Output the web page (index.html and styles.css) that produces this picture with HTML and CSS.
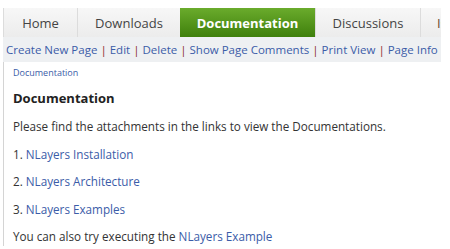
FILE: index.html
```html
<!DOCTYPE html>
<html lang="en">
<head>
    <meta charset="UTF-8">
    <title>Documentation</title>
    <link rel="stylesheet" href="styles.css">
</head>
<body>
<div class="page">
    <div class="tabs">
        <a class="tab" href="#">Home</a>
        <a class="tab" href="#">Downloads</a>
        <a class="tab active" href="#">Documentation</a>
        <a class="tab" href="#">Discussions</a>
        <a class="tab" href="#">Issue Tracker</a>
    </div>
    <div class="actions">
        <a href="#">Create New Page</a> <span class="sep">|</span>
        <a href="#">Edit</a> <span class="sep">|</span>
        <a href="#">Delete</a> <span class="sep">|</span>
        <a href="#">Show Page Comments</a> <span class="sep">|</span>
        <a href="#">Print View</a> <span class="sep">|</span>
        <a href="#">Page Info</a>
    </div>
    <div class="content">
        <div class="crumb"><a href="#">Documentation</a></div>
        <h2>Documentation</h2>
        <p>Please find the attachments in the links to view the Documentations.</p>
        <p>1. <a href="#">NLayers Installation</a></p>
        <p>2. <a href="#">NLayers Architecture</a></p>
        <p>3. <a href="#">NLayers Examples</a></p>
        <p>You can also try executing the <a href="#">NLayers Example</a></p>
    </div>
</div>
</body>
</html>
```

FILE: styles.css
```css
body {
    margin: 0;
    background: #ffffff;
    font-family: "Open Sans", "DejaVu Sans", sans-serif;
    color: #333;
    overflow: hidden;
}
a {
    color: #3b5ca8;
    text-decoration: none;
}
.page {
    width: 438px;
    margin: 8px 0 0 3px;
}
.tabs {
    display: flex;
    height: 29px;
    background: linear-gradient(#f7f7f7, #ececec);
    overflow: hidden;
    white-space: nowrap;
}
.tab {
    flex: none;
    display: flex;
    align-items: center;
    justify-content: center;
    height: 29px;
    font-size: 13px;
    color: #444;
    border-left: 1px solid #dcdcdc;
    box-sizing: border-box;
}
.tab:nth-child(1) { width: 74px; }
.tab:nth-child(2) { width: 103px; }
.tab:nth-child(3) { width: 135px; }
.tab:nth-child(4) { width: 105px; }
.tab:nth-child(5) { width: 100px; justify-content: flex-start; padding-left: 16px; color: #6b4a2a; }
.tab.active {
    background: linear-gradient(#6aab2c, #3f800c);
    color: #ffffff;
    font-weight: bold;
    border-left: none;
}
.actions {
    height: 25px;
    line-height: 25px;
    padding-left: 3px;
    font-size: 11.5px;
    background: #eef0f2;
    white-space: nowrap;
    overflow: hidden;
}
.sep {
    color: #8b2e2e;
}
.content {
    border-left: 1px solid #d4d4d4;
    padding: 4px 0 0 9px;
    font-size: 11.7px;
    min-height: 180px;
}
.crumb {
    font-size: 9px;
    margin-bottom: 10px;
}
.content h2 {
    font-size: 13px;
    margin: 0 0 11px;
    color: #222;
}
.content p {
    margin: 0 0 11.5px;
    line-height: 16px;
}
```
